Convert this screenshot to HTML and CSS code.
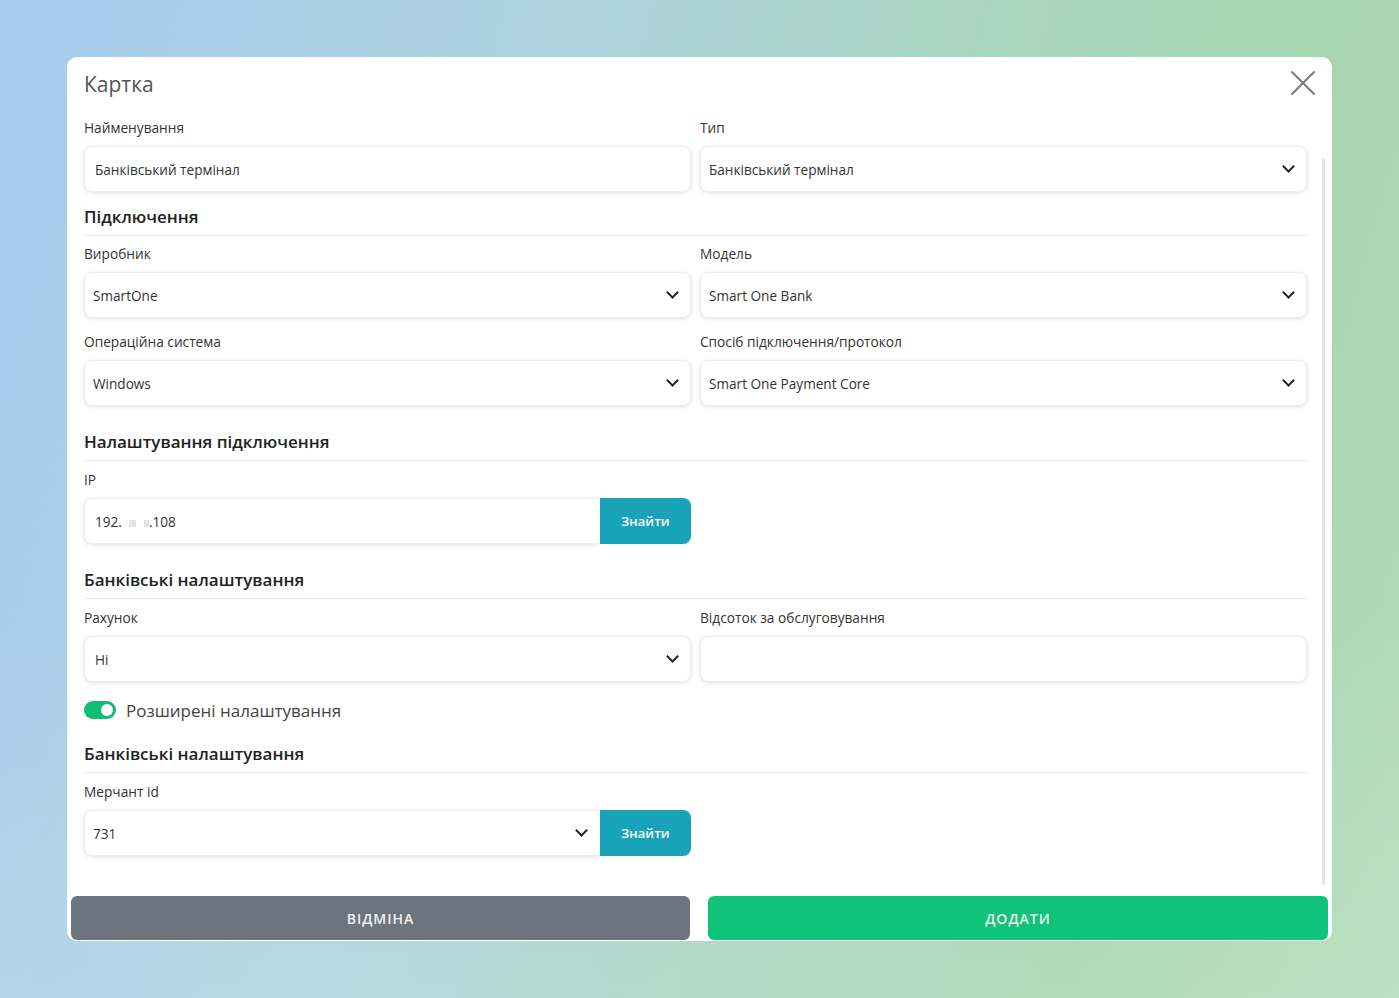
FILE: index.html
```html
<!DOCTYPE html>
<html lang="uk">
<head>
<meta charset="utf-8">
<title>Картка</title>
<link rel="stylesheet" href="styles.css">
</head>
<body>
<div class="backdrop">
  <div class="modal">
    <div class="modal-header">
      <h1 class="modal-title">Картка</h1>
      <button class="close-btn" aria-label="Закрити">
        <svg width="26" height="26" viewBox="0 0 26 26"><path d="M2 2 L24 24 M24 2 L2 24" stroke="#7a7a7a" stroke-width="2" fill="none" stroke-linecap="round"/></svg>
      </button>
    </div>

    <div class="modal-body">
      <div class="row">
        <div class="field">
          <label class="label">Найменування</label>
          <div class="control"><span class="value pad-wide">Банківський термінал</span></div>
        </div>
        <div class="field">
          <label class="label">Тип</label>
          <div class="control select"><span class="value">Банківський термінал</span><span class="chev"></span></div>
        </div>
      </div>

      <h2 class="section first">Підключення</h2>
      <div class="row">
        <div class="field">
          <label class="label">Виробник</label>
          <div class="control select"><span class="value">SmartOne</span><span class="chev"></span></div>
        </div>
        <div class="field">
          <label class="label">Модель</label>
          <div class="control select"><span class="value">Smart One Bank</span><span class="chev"></span></div>
        </div>
      </div>
      <div class="row">
        <div class="field">
          <label class="label">Операційна система</label>
          <div class="control select"><span class="value">Windows</span><span class="chev"></span></div>
        </div>
        <div class="field">
          <label class="label">Спосіб підключення/протокол</label>
          <div class="control select"><span class="value">Smart One Payment Core</span><span class="chev"></span></div>
        </div>
      </div>

      <h2 class="section">Налаштування підключення</h2>
      <div class="row">
        <div class="field">
          <label class="label">IP</label>
          <div class="group">
            <div class="control grow"><span class="value pad-wide">192.<span class="mask"><i></i><i></i></span>.108</span></div>
            <button class="find-btn">Знайти</button>
          </div>
        </div>
        <div></div>
      </div>

      <h2 class="section">Банківські налаштування</h2>
      <div class="row">
        <div class="field">
          <label class="label">Рахунок</label>
          <div class="control select"><span class="value pad-wide">Ні</span><span class="chev"></span></div>
        </div>
        <div class="field">
          <label class="label">Відсоток за обслуговування</label>
          <div class="control"></div>
        </div>
      </div>

      <div class="switch-row">
        <span class="switch"><span class="knob"></span></span>
        <span class="switch-text">Розширені налаштування</span>
      </div>

      <h2 class="section after-switch">Банківські налаштування</h2>
      <div class="row">
        <div class="field">
          <label class="label">Мерчант id</label>
          <div class="group">
            <div class="control select grow"><span class="value">731</span><span class="chev"></span></div>
            <button class="find-btn">Знайти</button>
          </div>
        </div>
        <div></div>
      </div>

      <span class="scroll-thumb"></span>
    </div>

    <div class="modal-footer">
      <button class="btn btn-cancel">Відміна</button>
      <button class="btn btn-add">Додати</button>
    </div>
  </div>
</div>
</body>
</html>
```

FILE: styles.css
```css
* { box-sizing: border-box; }

html, body {
  margin: 0;
  height: 100%;
}

body {
  font-family: "Open Sans", "Noto Sans", sans-serif;
  color: #333;
  background:
    linear-gradient(180deg, rgba(255,255,255,0) 60%, rgba(255,255,255,0.12) 100%),
    linear-gradient(105deg, #a7cbef 0%, #add4de 35%, #a9d6bd 62%, #a6d6b0 80%, #b4dcbc 100%);
}

.backdrop {
  height: 100%;
  display: flex;
  align-items: center;
  justify-content: center;
}

.modal {
  width: 1265px;
  height: 884px;
  background: #fff;
  border-radius: 10px;
  display: flex;
  flex-direction: column;
  position: relative;
}

/* header */
.modal-header {
  display: flex;
  justify-content: space-between;
  align-items: flex-start;
  padding: 12px 16px 0 17px;
  height: 61px;
}

.modal-title {
  margin: 0;
  font-size: 21px;
  font-weight: 400;
  color: #555;
  line-height: 30px;
}

.close-btn {
  border: 0;
  background: none;
  padding: 0;
  margin-top: 1px;
  width: 26px;
  height: 26px;
  cursor: pointer;
}

/* body */
.modal-body {
  flex: 1;
  padding: 0 25px 0 17px;
  position: relative;
}

.scroll-thumb {
  position: absolute;
  right: 7px;
  top: 40px;
  width: 3px;
  height: 727px;
  background: #e6e6e6;
  border-radius: 2px;
}

.row {
  display: grid;
  grid-template-columns: 1fr 1fr;
  column-gap: 9px;
}

.field {
  margin-bottom: 14px;
}

.label {
  display: block;
  font-size: 13.7px;
  line-height: 20px;
  color: #333;
  margin-bottom: 8px;
}

.control {
  height: 46px;
  background: #fff;
  border: 1px solid #eee;
  border-radius: 8px;
  box-shadow: 0 1px 4px rgba(0, 0, 0, 0.12);
  display: flex;
  align-items: center;
  padding: 0 13px 0 8px;
}

.value {
  font-size: 13.6px;
  color: #333;
  flex: 1;
  white-space: nowrap;
}

.value.pad-wide { padding-left: 2px; }

.chev {
  width: 9px;
  height: 9px;
  border-right: 2px solid #222;
  border-bottom: 2px solid #222;
  transform: rotate(45deg);
  margin-top: -5px;
}

.mask {
  display: inline-block;
  width: 27px;
  white-space: nowrap;
}
.mask i {
  display: inline-block;
  width: 7px;
  height: 7px;
  background: #e4e4e4;
  margin-left: 7px;
}
.mask i + i { margin-left: 8px; width: 5px; }

.group {
  display: flex;
}
.group .grow {
  flex: 1;
  border-top-right-radius: 0;
  border-bottom-right-radius: 0;
  border-right: 0;
}
.group .control.select { padding-right: 14px; }

.find-btn {
  width: 91px;
  height: 46px;
  border: 0;
  background: #18a3b9;
  color: #fff;
  font-family: inherit;
  font-size: 13px;
  font-weight: 600;
  border-radius: 0 8px 8px 0;
}

/* section headings */
.section {
  margin: 10px 0 9px;
  font-size: 17px;
  font-weight: 600;
  color: #222;
  line-height: 24px;
  padding-bottom: 6px;
  border-bottom: 1px solid #e8e8e8;
}
.section.first { margin: -1px 0 8px; }
.section.after-switch { margin-top: 20px; }

/* switch */
.switch-row {
  display: flex;
  align-items: center;
  gap: 10px;
  margin-top: 2px;
  height: 24px;
}
.switch {
  width: 32px;
  height: 18px;
  border-radius: 9px;
  background: #12bd72;
  position: relative;
}
.knob {
  position: absolute;
  right: 3px;
  top: 3px;
  width: 12px;
  height: 12px;
  border-radius: 50%;
  background: #fff;
}
.switch-text {
  font-size: 17px;
  color: #444;
}

/* footer */
.modal-footer {
  display: grid;
  grid-template-columns: 619px 620px;
  column-gap: 18px;
  padding: 0 4px 1px;
}

.btn {
  height: 44px;
  border: 0;
  border-radius: 6px;
  color: #f0f0f0;
  font-family: inherit;
  font-size: 14px;
  font-weight: 600;
  letter-spacing: 1px;
  text-transform: uppercase;
}
.btn-cancel { background: #6c757d; }
.btn-add { background: #0fc478; }
```
